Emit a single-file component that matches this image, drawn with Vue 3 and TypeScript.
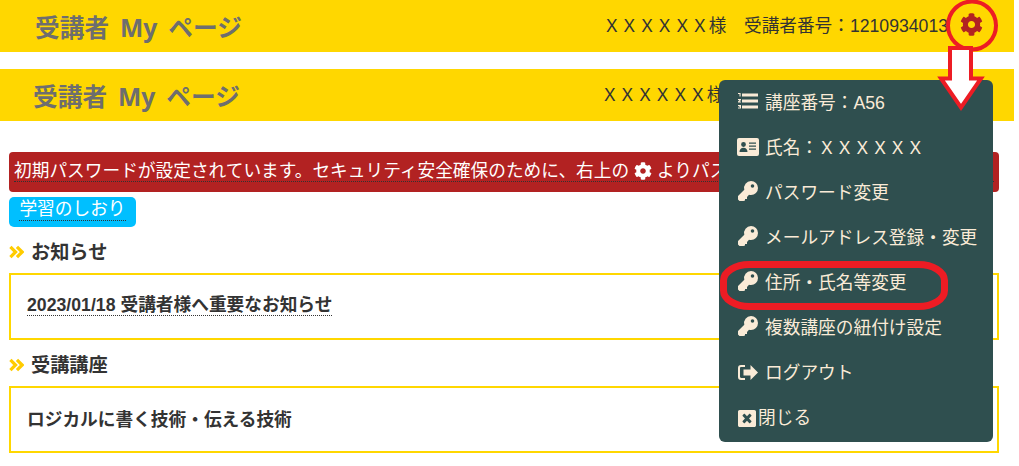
<script setup lang="ts">
type IconName = 'list' | 'card' | 'key' | 'logout' | 'close'

interface MenuItem {
  label: string
  icon: IconName
}

const menuItems: MenuItem[] = [
  { label: '講座番号：A56', icon: 'list' },
  { label: '氏名：ＸＸＸＸＸＸ', icon: 'card' },
  { label: 'パスワード変更', icon: 'key' },
  { label: 'メールアドレス登録・変更', icon: 'key' },
  { label: '住所・氏名等変更', icon: 'key' },
  { label: '複数講座の紐付け設定', icon: 'key' },
  { label: 'ログアウト', icon: 'logout' },
  { label: '閉じる', icon: 'close' },
]

const cogPath =
  'M487.4 315.7l-42.6-24.6c4.3-23.2 4.3-47 0-70.2l42.6-24.6c4.9-2.8 7.1-8.6 5.5-14-11.1-35.6-30-67.8-54.7-94.6-3.8-4.1-10-5.1-14.8-2.3L380.8 110c-17.9-15.4-38.5-27.3-60.8-35.1V25.8c0-5.6-3.9-10.5-9.4-11.7-36.7-8.2-74.3-7.8-109.2 0-5.5 1.2-9.4 6.1-9.4 11.7V75c-22.2 7.9-42.8 19.8-60.8 35.1L88.7 85.5c-4.9-2.8-11-1.9-14.8 2.3-24.7 26.7-43.6 58.9-54.7 94.6-1.7 5.4.6 11.2 5.5 14L67.3 221c-4.3 23.2-4.3 47 0 70.2l-42.6 24.6c-4.9 2.8-7.1 8.6-5.5 14 11.1 35.6 30 67.8 54.7 94.6 3.8 4.1 10 5.1 14.8 2.3l42.6-24.6c17.9 15.4 38.5 27.3 60.8 35.1v49.2c0 5.6 3.9 10.5 9.4 11.7 36.7 8.2 74.3 7.8 109.2 0 5.5-1.2 9.4-6.1 9.4-11.7v-49.2c22.2-7.9 42.8-19.8 60.8-35.1l42.6 24.6c4.9 2.8 11 1.9 14.8-2.3 24.7-26.7 43.6-58.9 54.7-94.6 1.5-5.5-.7-11.3-5.6-14.1zM256 336c-44.1 0-80-35.9-80-80s35.9-80 80-80 80 35.9 80 80-35.9 80-80 80z'
</script>

<template>
  <div class="page">
    <header class="topbar topbar--first">
      <h1 class="topbar__title">受講者 My ページ</h1>
      <div class="topbar__user">ＸＸＸＸＸＸ様　受講者番号：1210934013</div>
      <svg class="topbar__cog" viewBox="0 0 512 512"><path :d="cogPath" /></svg>
    </header>
    <header class="topbar topbar--second">
      <h1 class="topbar__title">受講者 My ページ</h1>
      <div class="topbar__user">ＸＸＸＸＸＸ様　受講者番号：1210934013</div>
      <svg class="topbar__cog" viewBox="0 0 512 512"><path :d="cogPath" /></svg>
    </header>

    <main class="content">
      <div class="alert">
        <a class="alert__link">初期パスワードが設定されています。セキュリティ安全確保のために、右上の
          <svg class="alert__cog" viewBox="0 0 512 512"><path :d="cogPath" /></svg>
          よりパスワードを変更してください。</a>
      </div>
      <a class="guide"><span class="guide__text">学習のしおり</span></a>

      <h2 class="heading">
        <svg class="heading__mark" viewBox="0 0 16 14"><path d="M1.5 1.500 7 7l-5.500 5.500M8.500 1.500 14 7l-5.500 5.500" /></svg>
        <span class="heading__text">お知らせ</span>
      </h2>
      <section class="box box--news">
        <a class="box__link">2023/01/18 受講者様へ重要なお知らせ</a>
      </section>

      <h2 class="heading">
        <svg class="heading__mark" viewBox="0 0 16 14"><path d="M1.5 1.500 7 7l-5.500 5.500M8.500 1.500 14 7l-5.500 5.500" /></svg>
        <span class="heading__text">受講講座</span>
      </h2>
      <section class="box">
        <span class="box__course">ロジカルに書く技術・伝える技術</span>
      </section>
    </main>

    <nav class="menu">
      <a v-for="item in menuItems" :key="item.label" class="menu__item" :class="{ 'menu__item--close': item.icon === 'close' }">
        <svg v-if="item.icon === 'list'" class="menu__icon menu__icon--list" viewBox="0 0 20 16">
          <path d="M4 .5h16v3H4zM4 6.500h16v3H4zM4 12.500h16v3H4z" />
          <path d="M0 0h2.600v3.500H1.500V1H0zM0 6h3v1L1.600 8.500H3v1H0v-1L1.400 7H0zM0 12h3v3.500H0v-1h2v-.4H.8v-.8H2V13H0z" />
        </svg>
        <svg v-else-if="item.icon === 'card'" class="menu__icon menu__icon--card" viewBox="0 0 22 18">
          <path fill-rule="evenodd" d="M2 0h18a2 2 0 0 1 2 2v14a2 2 0 0 1-2 2H2a2 2 0 0 1-2-2V2a2 2 0 0 1 2-2zm4.500 4.100a2.400 2.400 0 1 0 0 4.800 2.400 2.400 0 0 0 0-4.800zM2.500 14h8c0-2.700-1.500-4.300-4-4.300s-4 1.600-4 4.300zM12 4.500v1.300h7V4.500zm0 3v1.300h7V7.500zm0 3v1.300h7v-1.300z" />
        </svg>
        <svg v-else-if="item.icon === 'key'" class="menu__icon menu__icon--key" viewBox="0 0 20 20">
          <path fill-rule="evenodd" d="M13 0a7 7 0 0 1 0 14c-.7 0-1.400-.1-2-.3L9 16v2H7v1.500L5.500 20H1.500L0 18.500V15l6.300-6.300A7 7 0 0 1 13 0zm1.500 3.200a1.800 1.800 0 1 0 0 3.600 1.800 1.800 0 0 0 0-3.600z" />
        </svg>
        <svg v-else-if="item.icon === 'logout'" class="menu__icon menu__icon--logout" viewBox="0 0 20 15">
          <path d="M12.500 0 20 7.500 12.500 15v-4.500H5.500v-6h7zM7 0v2H3.200C2.500 2 2 2.500 2 3.200v8.600c0 .7.500 1.200 1.200 1.200H7v2H3a3 3 0 0 1-3-3V3a3 3 0 0 1 3-3z" />
        </svg>
        <svg v-else class="menu__icon menu__icon--close" viewBox="0 32 512 448" preserveAspectRatio="none">
          <path d="M464 32H48C21.500 32 0 53.500 0 80v352c0 26.500 21.500 48 48 48h416c26.500 0 48-21.500 48-48V80c0-26.500-21.500-48-48-48zm-83.600 290.500c4.800 4.800 4.800 12.600 0 17.400l-40.500 40.500c-4.800 4.800-12.600 4.800-17.400 0L256 313.300l-66.500 67.100c-4.800 4.800-12.600 4.800-17.400 0l-40.500-40.500c-4.800-4.800-4.800-12.600 0-17.400l67.100-66.500-67.100-66.500c-4.800-4.800-4.800-12.600 0-17.400l40.500-40.500c4.800-4.800 12.600-4.800 17.400 0l66.500 67.100 66.500-67.100c4.800-4.800 12.600-4.800 17.400 0l40.500 40.500c4.800 4.800 4.800 12.600 0 17.400L313.300 256l67.100 66.500z" />
        </svg>
        <span class="menu__label">{{ item.label }}</span>
      </a>
    </nav>

    <svg class="notes" viewBox="0 0 1019 466">
      <circle cx="972" cy="25.500" r="24" />
      <path d="M950 48h21v30.500h10l-20 29-20-29h9z" class="notes__arrow" />
      <rect x="723.500" y="264.500" width="221" height="42" rx="26" ry="16" class="notes__ring" />
    </svg>
  </div>
</template>

<style>
html,
body {
  margin: 0;
  background: #fff;
}
</style>

<style scoped>
.page {
  position: relative;
  width: 1019px;
  height: 466px;
  overflow: hidden;
  font-family: 'Liberation Sans', 'Noto Sans CJK JP', sans-serif;
  font-size: 17.7px;
  color: #333;
}

.topbar {
  display: flex;
  align-items: center;
  height: 52px;
  width: 1014px;
  background: #ffd700;
}

.topbar--first {
  padding: 0 30px 0 35px;
  box-sizing: border-box;
  margin-bottom: 17px;
}

.topbar--second {
  padding: 0 32px 0 33px;
  box-sizing: border-box;
}

.topbar__title {
  margin: 0 auto 0 0;
  padding-top: 3px;
  font-family: 'Noto Sans', 'Noto Sans CJK JP', sans-serif;
  font-size: 24.7px;
  line-height: 30px;
  word-spacing: 4.5px;
  font-weight: 700;
  color: #6e6e6e;
  white-space: nowrap;
}

.topbar__user {
  font-size: 17.65px;
  white-space: nowrap;
  margin-right: 12px;
  padding-bottom: 4px;
}

.topbar__cog {
  width: 23px;
  height: 23px;
  margin: 0 1px 3px 0;
  fill: #b22222;
}

.content {
  padding: 31px 20px 0 9px;
}

.alert {
  height: 40px;
  padding: 4px 5px 0;
  box-sizing: border-box;
  background: #b22222;
  border-radius: 4px;
  color: #fff;
  overflow: hidden;
  white-space: nowrap;
}

.alert__link {
  display: block;
  line-height: 31px;
  height: 25px;
  border-bottom: 1px dotted #333;
}

.alert__cog {
  width: 18px;
  height: 18px;
  fill: #fff;
  vertical-align: -3px;
}

.guide {
  display: flex;
  justify-content: center;
  width: 127px;
  height: 30px;
  margin-top: 5px;
  border-radius: 5px;
  background: #00bfff;
  color: #fff;
}

.guide__text {
  height: 23px;
  line-height: 25px;
  border-bottom: 1px dotted #333;
}

.heading {
  display: flex;
  align-items: center;
  gap: 7px;
  height: 21px;
  margin: 15px 0 10px;
  font-size: 19.2px;
  font-weight: 700;
}

.heading__mark {
  width: 15px;
  height: 14px;
  margin-bottom: 1px;
  fill: none;
  stroke: #ffcc00;
  stroke-width: 3.4;
}

.heading__text {
  padding-bottom: 3px;
}

.box {
  display: flex;
  align-items: center;
  height: 67px;
  padding: 0 16px;
  box-sizing: border-box;
  border: 2px solid #ffd700;
  font-weight: 700;
}

.box--news {
  margin-bottom: 14px;
}

.box__link {
  display: inline-block;
  padding-bottom: 2px;
  border-bottom: 1px dotted #333;
  line-height: 16px;
}

.box__course {
  padding-bottom: 4px;
}

.menu {
  position: absolute;
  left: 719px;
  top: 80px;
  width: 274px;
  height: 362px;
  padding: 0 0 0 18px;
  box-sizing: border-box;
  background: #2f4f4f;
  border-radius: 6px;
  color: #faebd7;
}

.menu__item {
  display: flex;
  align-items: center;
  gap: 7px;
  height: 45px;
  white-space: nowrap;
}

.menu__item--close {
  gap: 2px;
  height: 46px;
}

.menu__label {
  padding-bottom: 4px;
}

.menu__icon {
  flex: none;
  margin-left: 1px;
  fill: #faebd7;
}

.menu__icon--list {
  width: 20px;
  height: 16px;
  margin-bottom: 3px;
}

.menu__icon--card {
  width: 22px;
  height: 18px;
  margin: 0 -1px 2px 0;
}

.menu__icon--key {
  width: 20px;
  height: 20px;
  margin-bottom: 3px;
}

.menu__icon--logout {
  width: 20px;
  height: 15px;
  margin-bottom: 1px;
}

.menu__icon--close {
  width: 18px;
  height: 17px;
}

.notes {
  position: absolute;
  inset: 0;
  width: 1019px;
  height: 466px;
  fill: none;
  stroke: #ed1c24;
  stroke-width: 4;
  pointer-events: none;
}

.notes__arrow {
  fill: #fff;
}

.notes__ring {
  stroke-width: 7;
}
</style>
